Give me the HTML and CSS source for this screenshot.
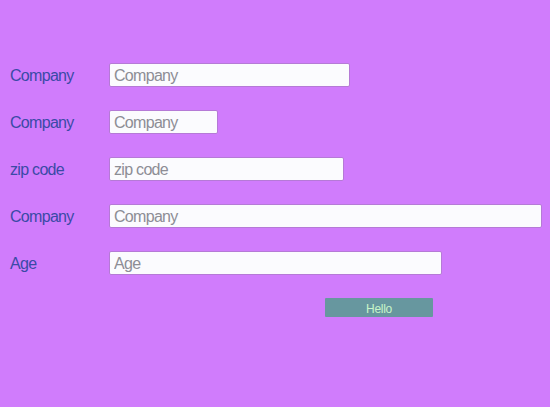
FILE: index.html
```html
<!DOCTYPE html>
<html>
<head>
<meta charset="utf-8">
<link rel="stylesheet" href="styles.css">
</head>
<body>
<form class="form">
  <div class="row"><label class="label">Company</label><input class="field w240" placeholder="Company"></div>
  <div class="row"><label class="label">Company</label><input class="field w108" placeholder="Company"></div>
  <div class="row"><label class="label">zip code</label><input class="field w234" placeholder="zip code"></div>
  <div class="row"><label class="label">Company</label><input class="field w432" placeholder="Company"></div>
  <div class="row"><label class="label">Age</label><input class="field w332" placeholder="Age"></div>
  <div class="actions"><button type="button" class="btn">Hello</button></div>
</form>
</body>
</html>
```
FILE: styles.css
```css
html, body {
  margin: 0;
  padding: 0;
  background: #d07cfc;
  width: 550px;
  height: 407px;
  overflow: hidden;
}
.form {
  display: flex;
  flex-direction: column;
  gap: 23px;
  padding-top: 63px;
  padding-left: 10px;
}
.row {
  display: flex;
  align-items: center;
  height: 24px;
}
.label {
  width: 99px;
  font-family: "Liberation Sans", Arial, sans-serif;
  font-size: 16px;
  letter-spacing: -0.7px;
  color: #3a4aa6;
  padding-top: 1px;
}
.field {
  box-sizing: border-box;
  height: 24px;
  margin: 0;
  padding: 1px 4px 0;
  border: 1px solid #b57ad6;
  border-radius: 2px;
  background: #fbfbfe;
  font-family: "Liberation Sans", Arial, sans-serif;
  font-size: 16px;
  letter-spacing: -0.7px;
  color: #333;
  outline: none;
}
.field::placeholder {
  color: #8d8d95;
}
.w240 { width: 241px; }
.w108 { width: 109px; }
.w234 { width: 235px; }
.w432 { width: 433px; }
.w332 { width: 333px; }
.actions {
  padding-left: 315px;
}
.btn {
  box-sizing: border-box;
  width: 108px;
  height: 19px;
  margin: 0;
  padding: 3px 0 0;
  border: none;
  border-radius: 1px;
  background: #67979f;
  color: #c8f5c8;
  font-family: "Liberation Sans", Arial, sans-serif;
  font-size: 12px;
  letter-spacing: -0.3px;
  line-height: 16px;
}
```
